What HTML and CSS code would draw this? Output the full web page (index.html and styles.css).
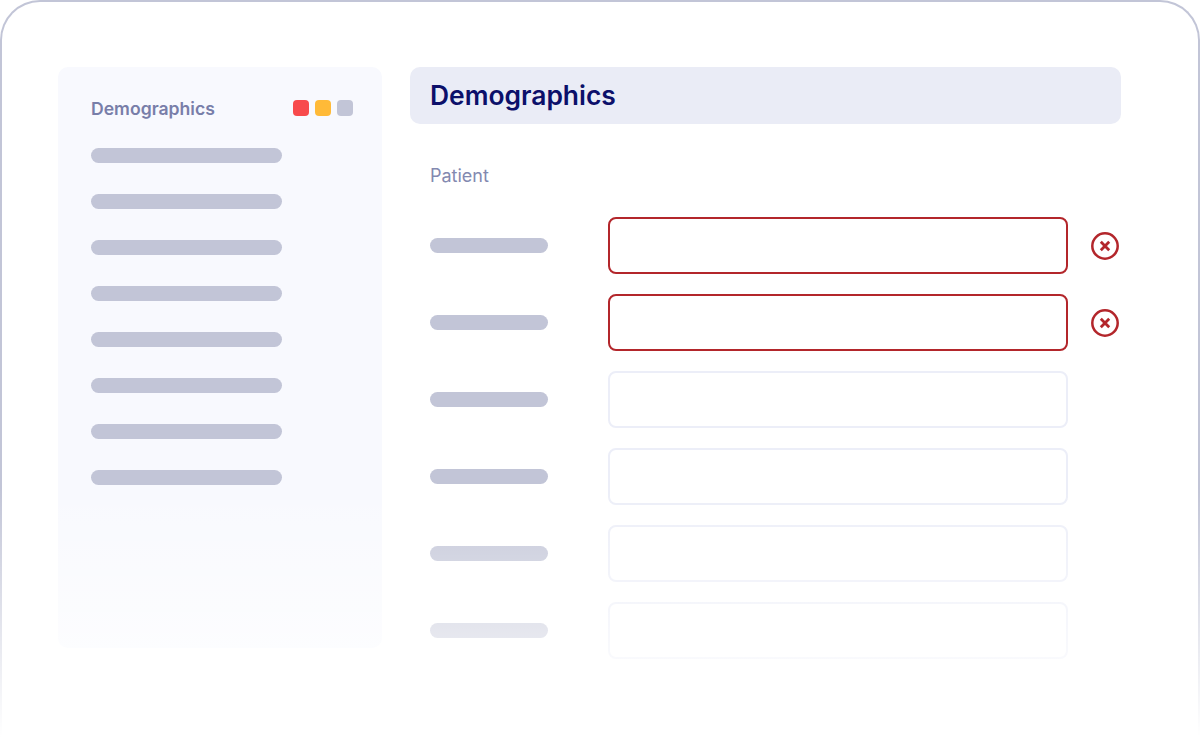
FILE: index.html
```html
<!DOCTYPE html>
<html lang="en">
<head>
    <meta charset="UTF-8">
    <meta name="viewport" content="width=device-width, initial-scale=1.0">
    <title>Demographics</title>
    <link rel="stylesheet" href="styles.css">
</head>
<body>

    <div class="frame">
        <!-- Sidebar -->
        <div class="sidebar">
            <div class="sidebar-head">
                <span class="sidebar-title">Demographics</span>
                <div class="dots">
                    <span class="dot dot-red"></span>
                    <span class="dot dot-yellow"></span>
                    <span class="dot dot-grey"></span>
                </div>
            </div>
            <div class="sidebar-list">
                <div class="bar"></div>
                <div class="bar"></div>
                <div class="bar"></div>
                <div class="bar"></div>
                <div class="bar"></div>
                <div class="bar"></div>
                <div class="bar"></div>
                <div class="bar"></div>
            </div>
        </div>

        <!-- Form -->
        <div class="main">
            <h1 class="main-title">Demographics</h1>
            <div class="section-label">Patient</div>
            <div class="rows">
                <div class="row">
                    <div class="bar row-label"></div>
                    <div class="field field-error"></div>
                    <svg class="error-icon" viewBox="0 0 28 28" fill="none">
                        <circle cx="14" cy="14" r="12.7"/>
                        <path d="M9.8 9.8L18.2 18.2M18.2 9.8L9.8 18.2"/>
                    </svg>
                </div>
                <div class="row">
                    <div class="bar row-label"></div>
                    <div class="field field-error"></div>
                    <svg class="error-icon" viewBox="0 0 28 28" fill="none">
                        <circle cx="14" cy="14" r="12.7"/>
                        <path d="M9.8 9.8L18.2 18.2M18.2 9.8L9.8 18.2"/>
                    </svg>
                </div>
                <div class="row">
                    <div class="bar row-label"></div>
                    <div class="field"></div>
                </div>
                <div class="row">
                    <div class="bar row-label"></div>
                    <div class="field"></div>
                </div>
                <div class="row">
                    <div class="bar row-label"></div>
                    <div class="field"></div>
                </div>
                <div class="row">
                    <div class="bar row-label"></div>
                    <div class="field"></div>
                </div>
            </div>
        </div>
    </div>

    <!-- White fade over the bottom of the frame -->
    <div class="fade"></div>

</body>
</html>
```

FILE: styles.css
```css
body {
    margin: 0;
    height: 750px;
    overflow: hidden;
    position: relative;
    background-color: #ffffff;
    font-family: Inter, "Liberation Sans", sans-serif;
}

.frame {
    box-sizing: border-box;
    height: 750px;
    display: flex;
    gap: 28px;
    align-items: flex-start;
    padding: 65px 77px 0 56px;
    border: 2px solid #c2c5d7;
    border-bottom: none;
    border-radius: 40px 40px 0 0;
}

.fade {
    position: absolute;
    left: 0;
    right: 0;
    top: 487px;
    height: 263px;
    background: linear-gradient(to bottom, rgba(255, 255, 255, 0), #ffffff 95%);
}

/* Sidebar */
.sidebar {
    box-sizing: border-box;
    width: 324px;
    height: 581px;
    padding: 33px 29px 0 33px;
    background-color: #f8f9fe;
    border-radius: 10px;
}

.sidebar-head {
    display: flex;
    justify-content: space-between;
    align-items: center;
    height: 16px;
}

.sidebar-title {
    font-size: 17.6px;
    font-weight: 600;
    color: #787ea9;
}

.dots {
    display: flex;
    gap: 6px;
}

.dot {
    width: 16px;
    height: 16px;
    border-radius: 4px;
}

.dot-red {
    background-color: #f84a4c;
}

.dot-yellow {
    background-color: #ffba38;
}

.dot-grey {
    background-color: #c2c5d7;
}

.sidebar-list {
    display: flex;
    flex-direction: column;
    gap: 31px;
    margin-top: 32px;
    width: 191px;
}

.bar {
    height: 15px;
    border-radius: 8px;
    background-color: #c2c5d7;
}

/* Form */
.main {
    width: 711px;
}

.main-title {
    margin: 0;
    height: 57px;
    padding-left: 20px;
    line-height: 57px;
    font-size: 26.4px;
    font-weight: 600;
    color: #0c106a;
    background-color: #eaecf6;
    border-radius: 10px;
}

.section-label {
    margin-top: 40px;
    padding-left: 20px;
    font-size: 18px;
    line-height: 24px;
    color: #8389b0;
}

.rows {
    display: flex;
    flex-direction: column;
    gap: 20px;
    margin-top: 29px;
    padding-left: 20px;
}

.row {
    display: flex;
    align-items: center;
}

.row-label {
    width: 118px;
    margin-right: 60px;
}

.field {
    box-sizing: border-box;
    width: 460px;
    height: 57px;
    border: 2px solid #eceef8;
    border-radius: 8px;
}

.field-error {
    border-color: #b3262b;
}

.error-icon {
    width: 28px;
    height: 28px;
    margin-left: 23px;
    stroke: #b3262b;
    stroke-width: 2.5;
}

.error-icon path {
    stroke-width: 2.8;
}
```
